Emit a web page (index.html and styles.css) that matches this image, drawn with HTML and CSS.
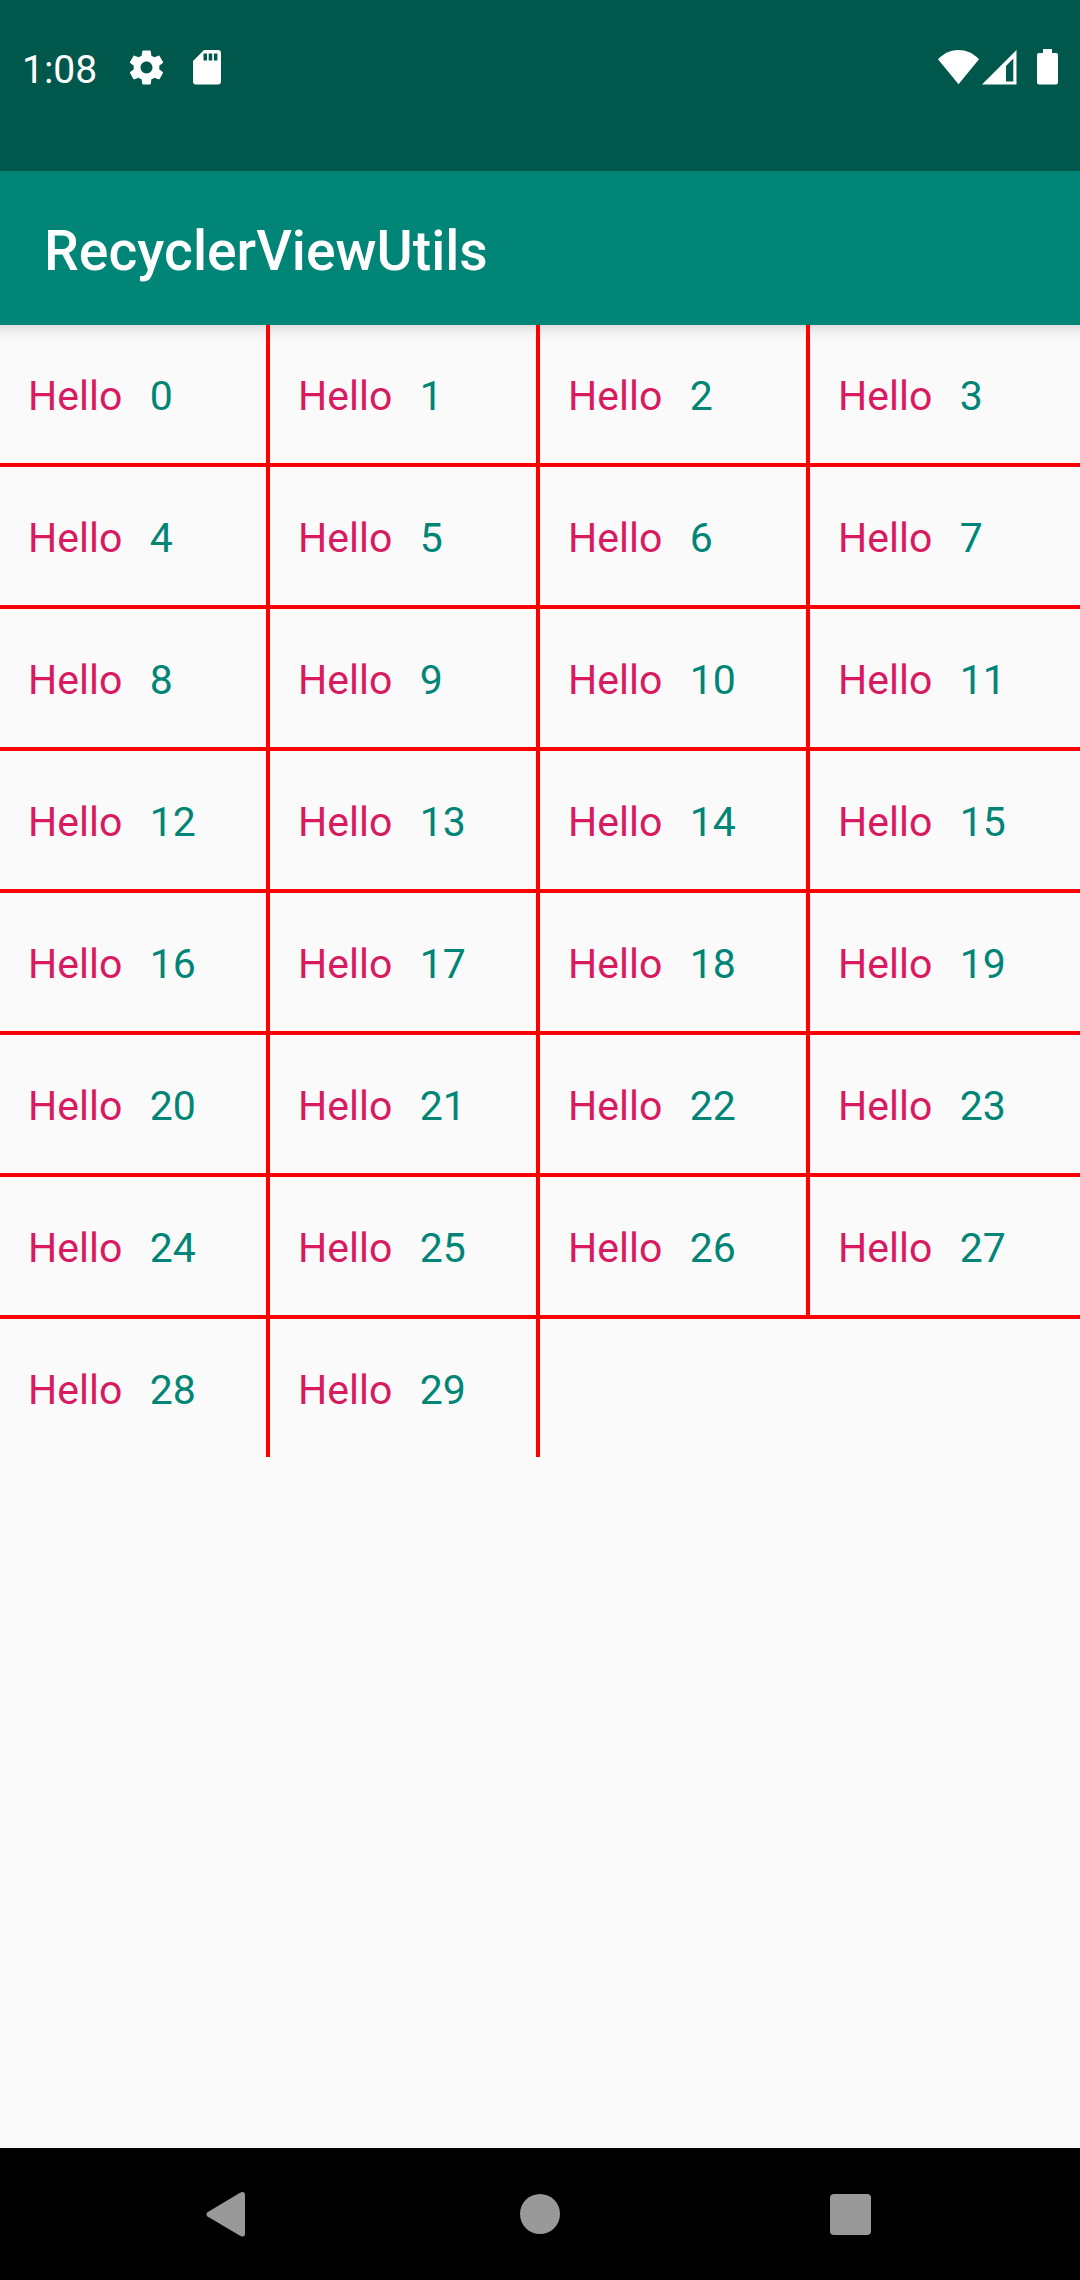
FILE: index.html
```html
<!DOCTYPE html>
<html lang="en">
<head>
<meta charset="utf-8">
<title>RecyclerViewUtils</title>
<link rel="stylesheet" href="styles.css">
</head>
<body>
<div class="screen">
  <header class="status-bar">
    <span class="clock">1:08</span>
    <svg class="icon gear" viewBox="0 0 24 24"><path d="M19.43 12.98c.04-.32.07-.64.07-.98s-.03-.66-.07-.98l2.11-1.65c.19-.15.24-.42.12-.64l-2-3.46c-.12-.22-.39-.3-.61-.22l-2.49 1c-.52-.4-1.08-.73-1.69-.98l-.38-2.65C14.46 2.18 14.25 2 14 2h-4c-.25 0-.46.18-.49.42l-.38 2.65c-.61.25-1.17.59-1.69.98l-2.49-1c-.23-.09-.49 0-.61.22l-2 3.46c-.13.22-.07.49.12.64l2.11 1.65c-.04.32-.07.65-.07.98s.03.66.07.98l-2.11 1.65c-.19.15-.24.42-.12.64l2 3.46c.12.22.39.3.61.22l2.49-1c.52.4 1.08.73 1.69.98l.38 2.65c.03.24.24.42.49.42h4c.25 0 .46-.18.49-.42l.38-2.65c.61-.25 1.17-.59 1.69-.98l2.49 1c.23.09.49 0 .61-.22l2-3.46c.12-.22.07-.49-.12-.64l-2.11-1.65zM12 15.5c-1.93 0-3.5-1.57-3.5-3.5s1.57-3.5 3.5-3.5 3.5 1.57 3.5 3.5-1.57 3.5-3.5 3.5z"/></svg>
    <svg class="icon sd-card" viewBox="0 0 28 35"><path fill-rule="evenodd" d="M11 0H25a3 3 0 0 1 3 3V31.500a3 3 0 0 1-3 3H3a3 3 0 0 1-3-3V11ZM10.500 3.500V10.500H14V3.500ZM15.700 3.500V10.500H19.200V3.500ZM20.900 3.500V10.500H24.400V3.500Z"/></svg>
    <span class="spacer"></span>
    <svg class="icon wifi" viewBox="0 0 41 35"><path d="M0 9.300C12-3 29-3 41 9.300L20.500 34.300Z"/></svg>
    <svg class="icon signal" viewBox="0 0 35 35"><path fill-rule="evenodd" d="M34.500 0V34.500H0ZM31.300 8.500L24 16V31.500H31.300Z"/></svg>
    <svg class="icon battery" viewBox="0 0 21 36"><path d="M6 0H15V4H19a2 2 0 0 1 2 2V33.500a2 2 0 0 1-2 2H2a2 2 0 0 1-2-2V6a2 2 0 0 1 2-2H6Z"/></svg>
  </header>
  <div class="app-bar"><h1 class="title">RecyclerViewUtils</h1></div>
  <main class="content"><div class="grid" id="grid"></div></main>
  <nav class="nav-bar">
    <svg class="nav-icon" viewBox="0 0 60 60"><path d="M7.500 28.200L40 8.700Q45 6.500 45 11.500V49.200Q45 54 40 51.800L7.500 32.600Q5.500 30.400 7.500 28.200Z"/></svg>
    <svg class="nav-icon" viewBox="0 0 60 60"><circle cx="30" cy="30" r="20"/></svg>
    <svg class="nav-icon" viewBox="0 0 60 60"><rect x="10" y="10" width="41" height="41" rx="4"/></svg>
  </nav>
</div>
<script src="grid.js"></script>
</body>
</html>
```
FILE: styles.css
```css
* { box-sizing: border-box; }
body { margin: 0; background: #fafafa; font-family: Roboto, sans-serif; }
.screen { display: flex; flex-direction: column; width: 1080px; height: 2280px; }

.status-bar {
  display: flex;
  align-items: flex-start;
  height: 171px;
  padding: 50px 22px 0 22px;
  background: #00574b;
  color: #fff;
}
.icon { display: block; flex: none; fill: #fff; }
.clock { width: 104px; font-size: 39px; line-height: 40px; white-space: nowrap; }
.gear { width: 41px; height: 41px; margin-top: -3px; }
.sd-card { width: 28px; height: 35px; margin-left: 26px; }
.spacer { flex: 1; }
.wifi { width: 41px; height: 35px; }
.signal { width: 35px; height: 35px; margin-left: 3px; }
.battery { width: 21px; height: 36px; margin: -1px 0 0 20px; }

.app-bar {
  display: flex;
  align-items: center;
  height: 154px;
  padding: 8px 44px 0;
  background: #008577;
  color: #fff;
}
.title { margin: 0; font-size: 55.3px; font-weight: 500; line-height: 64px; }

.content {
  flex: 1;
  background: linear-gradient(rgba(0, 0, 0, 0.11), rgba(0, 0, 0, 0.03) 8px, transparent 18px);
}
.grid { display: grid; grid-template-columns: repeat(4, 270px); grid-auto-rows: 142px; }
.cell {
  display: flex;
  align-items: center;
  gap: 27.5px;
  padding: 3px 0 0 28px;
  border-right: 4px solid #f00;
  border-bottom: 4px solid #f00;
  font-size: 41px;
  line-height: 48px;
}
.cell:nth-child(4n) { border-right: 0; }
.last-row { height: 138px; border-bottom: 0; }
.label { color: #d81b60; }
.number { color: #008577; }

.nav-bar {
  display: flex;
  justify-content: center;
  gap: 250px;
  height: 132px;
  padding-top: 36px;
  background: #000;
}
.nav-icon { width: 60px; height: 60px; fill: #999; }
```
FILE: grid.js
```js
const grid = document.getElementById('grid');
const count = 30;
const columns = 4;
const lastRowStart = Math.floor((count - 1) / columns) * columns;

for (let i = 0; i < count; i++) {
  const cell = document.createElement('div');
  cell.className = i >= lastRowStart ? 'cell last-row' : 'cell';
  cell.innerHTML = `<span class="label">Hello</span><span class="number">${i}</span>`;
  grid.append(cell);
}
```
